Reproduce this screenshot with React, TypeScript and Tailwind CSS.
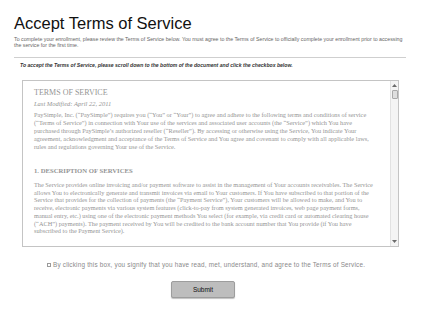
import React from "react";

const introLines = [
  "PaySimple, Inc. (“PaySimple”) requires you (“You” or “Your”) to agree and adhere to the following terms and conditions of service",
  "(“Terms of Service”) in connection with Your use of the services and associated user accounts (the “Service”) which You have",
  "purchased through PaySimple’s authorized reseller (“Reseller”). By accessing or otherwise using the Service, You indicate Your",
  "agreement, acknowledgment and acceptance of the Terms of Service and You agree and covenant to comply with all applicable laws,",
  "rules and regulations governing Your use of the Service.",
];

const serviceLines = [
  "The Service provides online invoicing and/or payment software to assist in the management of Your accounts receivables. The Service",
  "allows You to electronically generate and transmit invoices via email to Your customers. If You have subscribed to that portion of the",
  "Service that provides for the collection of payments (the “Payment Service”), Your customers will be allowed to make, and You to",
  "receive, electronic payments via various system features (click-to-pay from system generated invoices, web page payment forms,",
  "manual entry, etc.) using one of the electronic payment methods You select (for example, via credit card or automated clearing house",
  "(“ACH”) payments). The payment received by You will be credited to the bank account number that You provide (if You have",
  "subscribed to the Payment Service).",
];

export default function App() {
  return (
    <div className="h-[313px] w-[427px] overflow-hidden bg-white px-[14px] pt-[13px] font-['Liberation_Sans',Arial,sans-serif]">
      <h1 className="text-[16.5px] leading-[20px] text-[#111]">Accept Terms of Service</h1>
      <p className="mt-[3px] whitespace-nowrap text-[5.25px] leading-[6px] text-[#666]">
        To complete your enrollment, please review the Terms of Service below. You must agree to the Terms of Service to
        officially complete your enrollment prior to accessing
        <br />
        the service for the first time.
      </p>

      <div className="mt-[9px] w-[392px] border-t border-[#cfcfcf]" />

      <p className="mt-[4px] pl-[6px] text-[5.1px] font-bold italic leading-[6px] text-[#333]">
        To accept the Terms of Service, please scroll down to the bottom of the document and click the checkbox below.
      </p>

      <div className="ml-[8px] mt-[12px] flex h-[167px] w-[377px] border border-[#c4c4c4] bg-white">
        <div className="min-w-0 flex-1 overflow-hidden pl-[11px] pt-[7px] font-['Liberation_Serif','Times_New_Roman',serif] text-[#959595]">
          <div className="whitespace-nowrap text-[8px] leading-[10px]">TERMS OF SERVICE</div>
          <div className="mt-[2px] whitespace-nowrap text-[6.5px] italic leading-[8px]">Last Modified: April 22, 2011</div>
          <div className="mt-[3px] text-[6.3px] leading-[8px]">
            {introLines.map((line) => (
              <div key={line} className="whitespace-nowrap">
                {line}
              </div>
            ))}
          </div>
          <div className="mt-[16px] whitespace-nowrap text-[6.7px] font-bold leading-[8px]">1. DESCRIPTION OF SERVICES</div>
          <div className="mt-[6px] text-[6.3px] leading-[7.7px]">
            {serviceLines.map((line) => (
              <div key={line} className="whitespace-nowrap">
                {line}
              </div>
            ))}
          </div>
        </div>

        <div className="flex w-[8px] flex-col items-center border-l border-[#e2e2e2] bg-[#f4f4f4] py-[2px]">
          <svg width="5" height="3" viewBox="0 0 5 3" className="mt-[1px]">
            <path d="M2.5 0 L5 3 L0 3 Z" fill="#6b6b6b" />
          </svg>
          <div className="mt-[3px] h-[9px] w-[6px] rounded-[1px] border border-[#a9a9a9] bg-[#dedede]" />
          <div className="flex-1" />
          <svg width="5" height="3" viewBox="0 0 5 3" className="mb-[1px]">
            <path d="M0 0 L5 0 L2.5 3 Z" fill="#6b6b6b" />
          </svg>
        </div>
      </div>

      <label className="ml-[33px] mt-[14px] flex h-[8px] items-center gap-[2px] text-[6.35px] tracking-[0.2px] text-[#8a8a8a]">
        <span className="h-[4px] w-[4px] shrink-0 border border-[#9a9a9a] bg-white" />
        <span className="whitespace-nowrap">
          By clicking this box, you signify that you have read, met, understand, and agree to the Terms of Service.
        </span>
      </label>

      <button
        type="button"
        className="ml-[157px] mt-[12px] flex h-[17px] w-[64px] items-center justify-center rounded-[2px] border border-[#9d9d9d] bg-[#bdbdbd] text-[6.5px] text-[#111] shadow-[0_1px_1px_rgba(0,0,0,0.25)]"
      >
        Submit
      </button>
    </div>
  );
}
